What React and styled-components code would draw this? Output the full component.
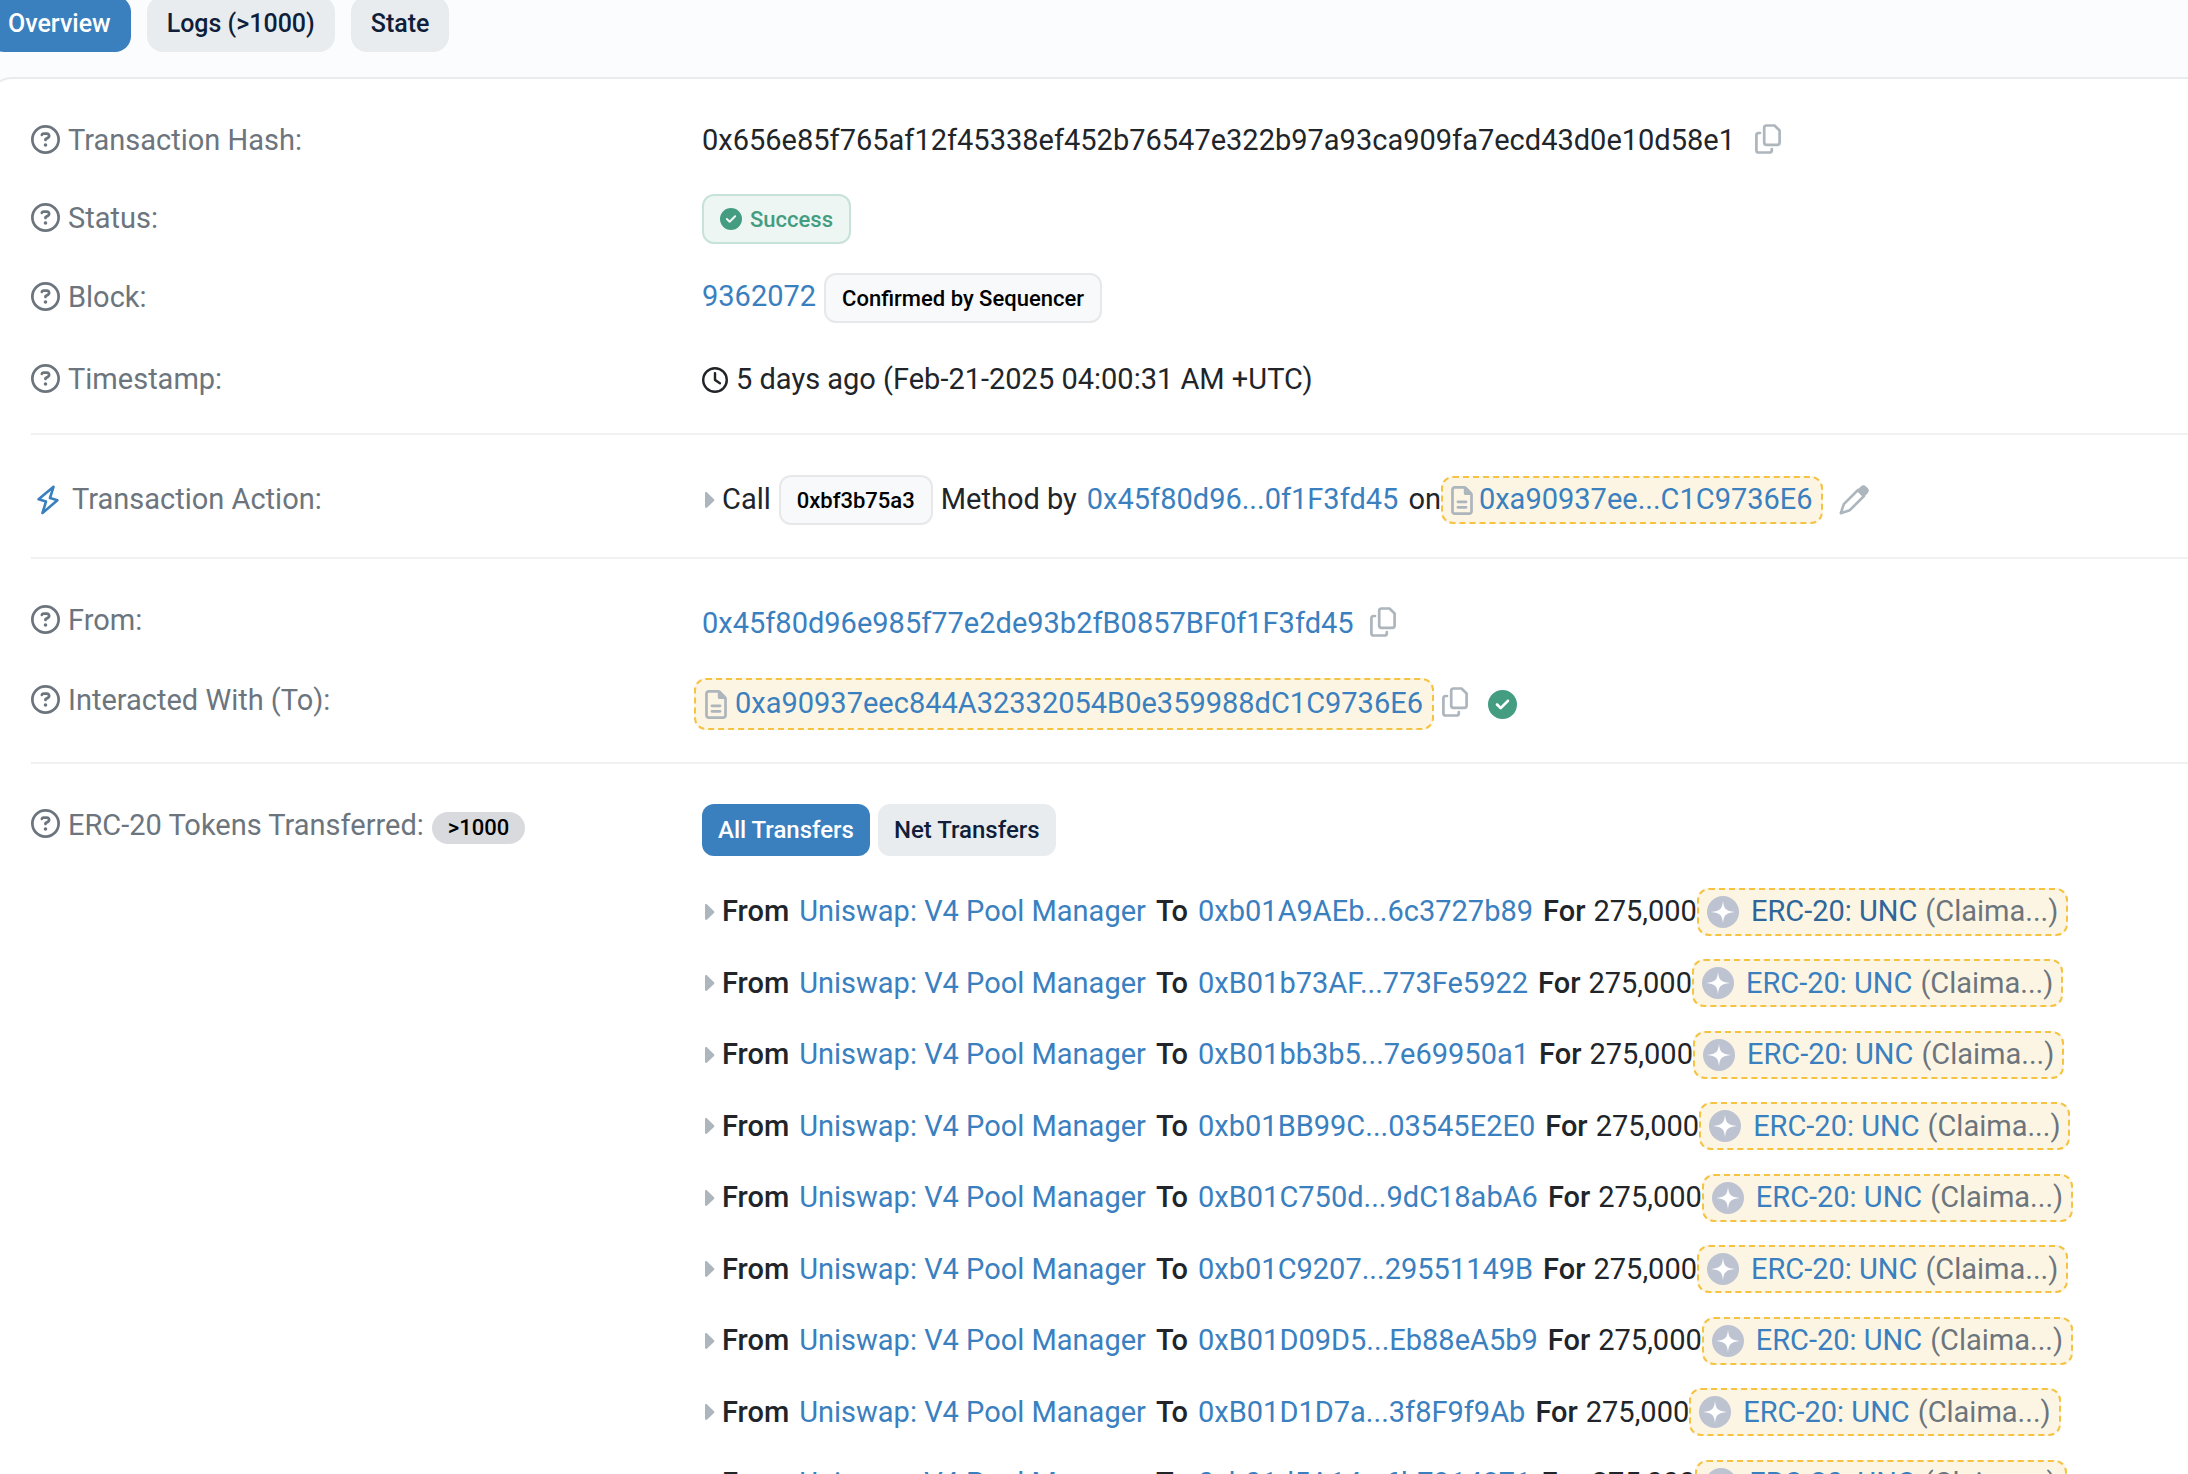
import React from "react";
import styled, { createGlobalStyle, css } from "styled-components";
import {
  FaCircleCheck,
  FaRegCircleQuestion,
  FaRegClock,
  FaRegFileLines,
} from "react-icons/fa6";

const Global = createGlobalStyle`
  *, *::before, *::after { box-sizing: border-box; }
  body {
    margin: 0;
    overflow-x: hidden;
    background: #fbfcfe;
    color: #212529;
    font-family: Roboto, "Liberation Sans", sans-serif;
    font-size: 29px;
    line-height: 1.5;
  }
  button { font: inherit; border: 0; cursor: pointer; }
  ul, dl, dd, dt { margin: 0; padding: 0; font: inherit; }
  ul { list-style: none; }
  a { color: #3a80bf; text-decoration: none; }
  svg { display: block; flex: none; }
`;

const Page = styled.main`
  height: 100vh;
  overflow: hidden;
`;

const Shell = styled.div`
  margin: 0 -60px 0 -12px;
`;

const pill = css`
  display: flex;
  align-items: center;
  height: 52px;
  border-radius: 16px;
  font-weight: 500;
  white-space: nowrap;
  background: ${(p) => (p.$active ? "#3a80bf" : "#e9ecef")};
  color: ${(p) => (p.$active ? "#fff" : "#0f1e3a")};
`;

const Tabs = styled.nav`
  display: flex;
  gap: 16px;
  margin-bottom: 25px;
`;

const Tab = styled.button`
  ${pill}
  height: 56px;
  margin-top: -4px;
  padding: 0 20px;
  font-size: 25px;
`;

const Card = styled.section`
  background: #fff;
  border: 2px solid #e9ecef;
  border-radius: 24px;
  padding: 20px 41px 0;
`;

const Section = styled.dl`
  padding: ${(p) => p.$pad};
  border-bottom: 2px solid #f0f1f2;
  &:last-child { border-bottom: 0; }
`;

const Row = styled.div`
  display: grid;
  grid-template-columns: 671px 1fr;
  align-items: ${(p) => (p.$top ? "start" : "center")};
  min-height: ${(p) => p.$h || 78}px;
`;

const Label = styled.dt`
  display: flex;
  align-items: baseline;
  gap: 8px;
  color: #6c757d;
  white-space: nowrap;
`;

const HelpMark = styled.span`
  align-self: center;
  margin-bottom: 4px;
`;

const BoltMark = styled.span`
  display: flex;
  align-self: center;
  justify-content: center;
  width: 33px;
  color: #3a80bf;
`;

const Value = styled.dd`
  display: flex;
  align-items: ${(p) => (p.$baseline ? "baseline" : "center")};
  gap: 8px;
  padding-top: ${(p) => (p.$low ? 6 : 0)}px;
  white-space: nowrap;
`;

const Badge = styled.span`
  display: inline-flex;
  align-items: center;
  gap: 8px;
  height: 50px;
  padding: 0 16px;
  border: 2px solid ${(p) => (p.$ok ? "#c6e2d9" : "#e6e8ea")};
  border-radius: 12px;
  background: ${(p) => (p.$ok ? "#edf6f3" : "#f8f9fa")};
  color: ${(p) => (p.$ok ? "#449d80" : "#000")};
  font-size: 22px;
  font-weight: 500;
`;

const Count = styled.span`
  padding: 0 16px;
  border-radius: 16px;
  background: #d9dade;
  color: #000;
  font-size: 22px;
  font-weight: 500;
  line-height: 32px;
`;

const IconButton = styled.button`
  display: flex;
  padding: 0;
  margin-left: ${(p) => p.$gap || 0}px;
  margin-bottom: ${(p) => (p.$raised ? 4 : 0)}px;
  background: none;
  color: #adb5bd;
`;

const Mark = styled.span`
  display: flex;
  color: #adb5bd;
`;

const FileMark = styled(Mark)`
  svg { width: 22px; }
`;

const VerifiedMark = styled(Mark)`
  margin-left: 12px;
  color: #449d80;
`;

const Highlight = styled.span`
  display: inline-flex;
  align-items: center;
  gap: ${(p) => p.$gap || 6}px;
  height: ${(p) => (p.$tall ? 52 : 48)}px;
  margin: -4px 0 -4px ${(p) => (p.$tall ? -8 : 0)}px;
  padding: 0 ${(p) => (p.$tall ? 9 : 8)}px;
  border: 2px dashed #f5c342;
  border-radius: 12px;
  background: #fdf5e3;
`;

const Sub = styled.span`
  color: #6c757d;
`;

const Toggle = styled.div`
  display: flex;
  gap: 8px;
`;

const ToggleButton = styled.button`
  ${pill}
  padding: 0 16px;
  border-radius: 12px;
  font-size: 24px;
`;

const Transfers = styled.ul`
  display: grid;
  gap: 28px;
  margin-top: 34px;
`;

const Transfer = styled.li`
  display: flex;
  align-items: center;
  gap: 10px;
  height: 1.5em;
  white-space: nowrap;
`;

const Pair = styled.span`
  display: flex;
  align-items: center;
  gap: ${(p) => p.$gap}px;
`;

const Strong = styled.span`
  font-weight: 500;
`;

const TokenLink = styled.a`
  color: ${(p) => (p.$hover ? "#2e6699" : "#3a80bf")};
`;

const Bolt = () => (
  <svg width="22" height="30" viewBox="0 0 22 30" fill="none" stroke="currentColor" strokeWidth="2.6" strokeLinejoin="round">
    <path d="M16.500 1.800 1.600 14.300 9 16.500 5.500 28 20.400 15.300 13 13Z" />
  </svg>
);

const Caret = () => (
  <Mark>
    <svg width="13" height="16" viewBox="0 0 13 16" aria-hidden="true">
      <path d="M3 1.200C3 .1 4.300-.4 5.100.4L12 7.200c.5.500.5 1.200 0 1.700L5.100 15.600C4.300 16.400 3 15.900 3 14.800Z" fill="currentColor" />
    </svg>
  </Mark>
);

const Pencil = () => (
  <svg width="30" height="30" viewBox="0 0 30 30" fill="none" stroke="currentColor" strokeWidth="2.600" strokeLinejoin="round">
    <path d="M19 5 4.800 19.200 1.800 28.200 10.800 25.200 25 11Z" />
    <path d="M17.500 5.500 21.800 1.400a3.800 3.800 0 0 1 5.200 0l1.600 1.600a3.800 3.800 0 0 1 0 5.200L24.500 12.500Z" fill="currentColor" stroke="none" />
  </svg>
);

const Copy = ({ label, gap }) => (
  <IconButton type="button" aria-label={label} $gap={gap} $raised>
    <svg width="26" height="30" viewBox="0 0 26 30" fill="none" stroke="currentColor" strokeWidth="2.700" strokeLinecap="round" strokeLinejoin="round">
      <path d="M11.500 1.500H19.500L24.600 6.500V18.500a2.300 2.300 0 0 1-2.300 2.300H11.500a2.300 2.300 0 0 1-2.300-2.300V3.800a2.300 2.300 0 0 1 2.300-2.300Z" />
      <path d="M5 9H3.700A2.300 2.300 0 0 0 1.400 11.300V26.200a2.300 2.300 0 0 0 2.300 2.300H14.500a2.300 2.300 0 0 0 2.300-2.300V25" />
    </svg>
  </IconButton>
);

const TokenLogo = () => (
  <svg width="32" height="32" viewBox="0 0 32 32" aria-hidden="true">
    <circle cx="16" cy="16" r="16" fill="#bdc3d1" />
    <path d="M16 4.500C16.600 12.500 18.500 15.200 28 16 18.500 16.800 16.600 19.500 16 27.500 15.400 19.500 13.500 16.800 4 16 13.500 15.200 15.400 12.500 16 4.500Z" fill="#fff" />
  </svg>
);

const Help = ({ children }) => (
  <Label>
    <HelpMark>
      <FaRegCircleQuestion size={29} />
    </HelpMark>
    {children}
  </Label>
);

const transfers = [
  "0xb01A9AEb...6c3727b89",
  "0xB01b73AF...773Fe5922",
  "0xB01bb3b5...7e69950a1",
  "0xb01BB99C...03545E2E0",
  "0xB01C750d...9dC18abA6",
  "0xb01C9207...29551149B",
  "0xB01D09D5...Eb88eA5b9",
  "0xB01D1D7a...3f8F9f9Ab",
  "0xb01d5A14...6b7914871",
];

export default function App() {
  return (
    <Page>
      <Global />
      <Shell>
        <Tabs>
          <Tab type="button" $active>Overview</Tab>
          <Tab type="button">Logs (&gt;1000)</Tab>
          <Tab type="button">State</Tab>
        </Tabs>
        <Card>
          <Section $pad="3px 0 11px">
            <Row>
              <Help>Transaction Hash:</Help>
              <Value>
                0x656e85f765af12f45338ef452b76547e322b97a93ca909fa7ecd43d0e10d58e1
                <Copy label="Copy transaction hash" gap={12} />
              </Value>
            </Row>
            <Row>
              <Help>Status:</Help>
              <Value>
                <Badge $ok>
                  <FaCircleCheck size={22} />
                  Success
                </Badge>
              </Value>
            </Row>
            <Row $h={80}>
              <Help>Block:</Help>
              <Value $baseline>
                <a href="#block">9362072</a>
                <Badge>Confirmed by Sequencer</Badge>
              </Value>
            </Row>
            <Row $h={84}>
              <Help>Timestamp:</Help>
              <Value>
                <FaRegClock size={26} />
                5 days ago (Feb-21-2025 04:00:31 AM +UTC)
              </Value>
            </Row>
          </Section>
          <Section $pad="23px 0 15px">
            <Row $h={84}>
              <Label>
                <BoltMark>
                  <Bolt />
                </BoltMark>
                Transaction Action:
              </Label>
              <Value>
                <Pair $gap={7}>
                  <Caret />
                  Call
                </Pair>
                <Badge>0xbf3b75a3</Badge>
                <Pair $gap={10}>
                  Method by
                  <a href="#sender">0x45f80d96...0f1F3fd45</a>
                  <Pair $gap={0}>
                    on
                    <Highlight>
                      <FileMark><FaRegFileLines size={29} /></FileMark>
                      <a href="#contract">0xa90937ee...C1C9736E6</a>
                    </Highlight>
                  </Pair>
                </Pair>
                <IconButton type="button" aria-label="Edit label" $gap={8}>
                  <Pencil />
                </IconButton>
              </Value>
            </Row>
          </Section>
          <Section $pad="22px 0 21px">
            <Row $h={80}>
              <Help>From:</Help>
              <Value $low>
                <a href="#sender">0x45f80d96e985f77e2de93b2fB0857BF0f1F3fd45</a>
                <Copy label="Copy sender address" gap={8} />
              </Value>
            </Row>
            <Row $h={80}>
              <Help>Interacted With (To):</Help>
              <Value $low>
                <Highlight $tall $gap={8}>
                  <FileMark><FaRegFileLines size={29} /></FileMark>
                  <a href="#contract">0xa90937eec844A32332054B0e359988dC1C9736E6</a>
                </Highlight>
                <Copy label="Copy contract address" />
                <VerifiedMark><FaCircleCheck size={29} /></VerifiedMark>
              </Value>
            </Row>
          </Section>
          <Section $pad="40px 0 0">
            <Row $top>
              <Help>
                ERC-20 Tokens Transferred:
                <Count>&gt;1000</Count>
              </Help>
              <dd>
                <Toggle>
                  <ToggleButton type="button" $active>All Transfers</ToggleButton>
                  <ToggleButton type="button">Net Transfers</ToggleButton>
                </Toggle>
                <Transfers>
                  {transfers.map((to, i) => (
                    <Transfer key={to}>
                      <Pair $gap={7}>
                        <Caret />
                        <Strong>From</Strong>
                      </Pair>
                      <a href="#pool">Uniswap: V4 Pool Manager</a>
                      <Strong>To</Strong>
                      <a href="#recipient">{to}</a>
                      <Pair $gap={8}>
                        <Strong>For</Strong>
                        <Pair $gap={0}>
                          275,000
                          <Highlight $gap={12}>
                            <TokenLogo />
                            <Pair $gap={8}>
                              <TokenLink href="#token" $hover={i === 0}>ERC-20: UNC</TokenLink>
                              <Sub>(Claima...)</Sub>
                            </Pair>
                          </Highlight>
                        </Pair>
                      </Pair>
                    </Transfer>
                  ))}
                </Transfers>
              </dd>
            </Row>
          </Section>
        </Card>
      </Shell>
    </Page>
  );
}
